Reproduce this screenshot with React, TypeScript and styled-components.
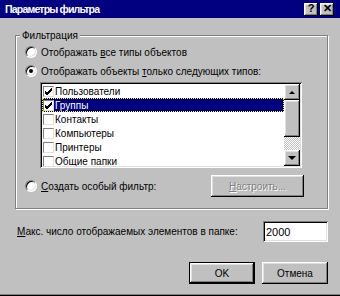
import React from 'react';
import styled, { createGlobalStyle, css } from 'styled-components';

const GlobalStyle = createGlobalStyle`
  html, body {
    margin: 0;
    padding: 0;
    background: #c0c0c0;
  }
  * {
    box-sizing: border-box;
  }
`;

const raised = css`
  background: #c0c0c0;
  box-shadow: inset -1px -1px #000, inset 1px 1px #fff, inset -2px -2px #808080, inset 2px 2px #dfdfdf;
`;

const sunken = css`
  background: #fff;
  box-shadow: inset 1px 1px #808080, inset -1px -1px #fff, inset 2px 2px #000, inset -2px -2px #dfdfdf;
`;

const Window = styled.div`
  width: 340px;
  height: 296px;
  background: #c0c0c0;
  font-family: "Liberation Sans", Arial, sans-serif;
  font-size: 10px;
  color: #000;
  display: flex;
  flex-direction: column;
  box-shadow: inset 0 -1px #000, inset 0 -2px #808080;
  overflow: hidden;
`;

const TitleBar = styled.div`
  height: 18px;
  background: #000080;
  display: flex;
  align-items: center;
  padding: 0 6px 0 5px;
`;

const Title = styled.div`
  flex: 1;
  color: #fff;
  font-weight: bold;
  font-size: 10.5px;
  letter-spacing: -0.8px;
`;

const CaptionButton = styled.div`
  ${raised};
  width: 14px;
  height: 13px;
  margin-left: 2px;
  display: flex;
  align-items: center;
  justify-content: center;
  font-weight: bold;
  font-size: 11px;
  line-height: 1;
  padding-bottom: 1px;
`;

const Body = styled.div`
  flex: 1;
  display: flex;
  flex-direction: column;
  padding: 17px 12px 0 15px;
`;

const GroupBox = styled.div`
  border: 1px solid #808080;
  box-shadow: inset 1px 1px #fff, 1px 1px #fff;
  display: flex;
  flex-direction: column;
  padding: 0 0 11px 9px;
`;

const Legend = styled.div`
  align-self: flex-start;
  margin: -7px 0 0 -5px;
  padding: 0 2px;
  line-height: 13px;
  background: #c0c0c0;
`;

const RadioRow = styled.div<{ $gap: number }>`
  display: flex;
  align-items: center;
  height: 14px;
  margin-top: ${p => p.$gap}px;
`;

const Radio = styled.span<{ $checked?: boolean }>`
  width: 12px;
  height: 12px;
  border-radius: 50%;
  background: #fff;
  border: 1px solid;
  border-color: #808080 #fff #fff #808080;
  box-shadow: inset 1px 1px #000, inset -1px -1px #dfdfdf;
  display: flex;
  align-items: center;
  justify-content: center;
  margin-right: 4px;
  flex-shrink: 0;

  &::after {
    content: '';
    width: 4px;
    height: 4px;
    border-radius: 50%;
    background: #000;
    display: ${p => (p.$checked ? 'block' : 'none')};
  }
`;

const ListBox = styled.div`
  ${sunken};
  width: 262px;
  height: 86px;
  margin: 4px 0 0 15px;
  padding: 2px;
  display: flex;
`;

const Items = styled.div`
  flex: 1;
  overflow: hidden;
`;

const Item = styled.div<{ $selected?: boolean }>`
  height: 14px;
  display: flex;
  align-items: center;
  padding-left: 1px;
  background: ${p => (p.$selected ? '#000080' : 'transparent')};
  color: ${p => (p.$selected ? '#fff' : '#000')};
  outline: ${p => (p.$selected ? '1px dotted #ffff00' : 'none')};
  outline-offset: -1px;
`;

const Check = styled.span`
  width: 11px;
  height: 11px;
  background: #fff;
  border: 1px solid;
  border-color: #808080 #dfdfdf #dfdfdf #808080;
  margin-right: 1px;
  display: flex;
  align-items: center;
  justify-content: center;
  flex-shrink: 0;
`;

const ScrollBar = styled.div`
  width: 16px;
  display: flex;
  flex-direction: column;
`;

const ScrollButton = styled.div`
  ${raised};
  height: 16px;
  display: flex;
  align-items: center;
  justify-content: center;
`;

const Thumb = styled.div`
  ${raised};
  height: 37px;
`;

const Track = styled.div`
  flex: 1;
  background: repeating-conic-gradient(#fff 0 25%, #c0c0c0 0 50%) 0 0 / 2px 2px;
`;

const Arrow = styled.span<{ $down?: boolean; $size: number }>`
  width: 0;
  height: 0;
  border-left: ${p => p.$size}px solid transparent;
  border-right: ${p => p.$size}px solid transparent;
  ${p =>
    p.$down
      ? `border-top: ${p.$size}px solid #000;`
      : `border-bottom: ${p.$size}px solid #000;`}
`;

const CustomRow = styled.div`
  display: flex;
  align-items: center;
  height: 22px;
  margin-top: 7px;
  padding-right: 23px;
`;

const PushButton = styled.button<{ $width: number; $default?: boolean; $disabled?: boolean }>`
  ${raised};
  border: none;
  width: ${p => p.$width}px;
  height: 22px;
  margin-left: auto;
  padding: 0;
  font-family: inherit;
  font-size: 10px;
  color: ${p => (p.$disabled ? '#808080' : '#000')};
  text-shadow: ${p => (p.$disabled ? '1px 1px #fff' : 'none')};
  ${p =>
    p.$default &&
    css`
      box-shadow: inset 0 0 0 1px #000, inset -2px -2px #000, inset 2px 2px #fff, inset -3px -3px #808080,
        inset 3px 3px #dfdfdf;
    `}
`;

const MaxRow = styled.div`
  display: flex;
  align-items: center;
  margin-top: 12px;
  padding-left: 2px;
`;

const Field = styled.div`
  ${sunken};
  width: 65px;
  height: 21px;
  margin-left: auto;
  padding: 0 3px;
  display: flex;
  align-items: center;
  font-size: 11px;
`;

const ButtonRow = styled.div`
  display: flex;
  justify-content: flex-end;
  gap: 7px;
  margin-top: 20px;
  & > button {
    margin-left: 0;
  }
`;

const CheckMark = () => (
  <svg width="9" height="9" viewBox="0 0 9 9">
    <path d="M1 4 L3 6 L8 1 M1 5 L3 7 L8 2 M1 6 L3 8 L8 3" stroke="#000" strokeWidth="1" fill="none" />
  </svg>
);

const items = [
  { name: 'Пользователи', checked: true },
  { name: 'Группы', checked: true, selected: true },
  { name: 'Контакты' },
  { name: 'Компьютеры' },
  { name: 'Принтеры' },
  { name: 'Общие папки' },
];

const App = () => {
  return (
    <Window>
      <GlobalStyle />
      <TitleBar>
        <Title>Параметры фильтра</Title>
        <CaptionButton>?</CaptionButton>
        <CaptionButton>✕</CaptionButton>
      </TitleBar>
      <Body>
        <GroupBox>
          <Legend>Фильтрация</Legend>
          <RadioRow $gap={3}>
            <Radio />
            <span>
              Отображать <u>в</u>се типы объектов
            </span>
          </RadioRow>
          <RadioRow $gap={5}>
            <Radio $checked />
            <span>
              Отображать объекты <u>т</u>олько следующих типов:
            </span>
          </RadioRow>
          <ListBox>
            <Items>
              {items.map(item => (
                <Item key={item.name} $selected={item.selected}>
                  <Check>{item.checked && <CheckMark />}</Check>
                  {item.name}
                </Item>
              ))}
            </Items>
            <ScrollBar>
              <ScrollButton>
                <Arrow $size={3} />
              </ScrollButton>
              <Thumb />
              <Track />
              <ScrollButton>
                <Arrow $down $size={4} />
              </ScrollButton>
            </ScrollBar>
          </ListBox>
          <CustomRow>
            <Radio />
            <span>
              <u>С</u>оздать особый фильтр:
            </span>
            <PushButton $width={93} $disabled>
              <u>Н</u>астроить...
            </PushButton>
          </CustomRow>
        </GroupBox>
        <MaxRow>
          <span>
            <u>М</u>акс. число отображаемых элементов в папке:
          </span>
          <Field>2000</Field>
        </MaxRow>
        <ButtonRow>
          <PushButton $width={66} $default>
            OK
          </PushButton>
          <PushButton $width={66}>Отмена</PushButton>
        </ButtonRow>
      </Body>
    </Window>
  );
};

export default App;
